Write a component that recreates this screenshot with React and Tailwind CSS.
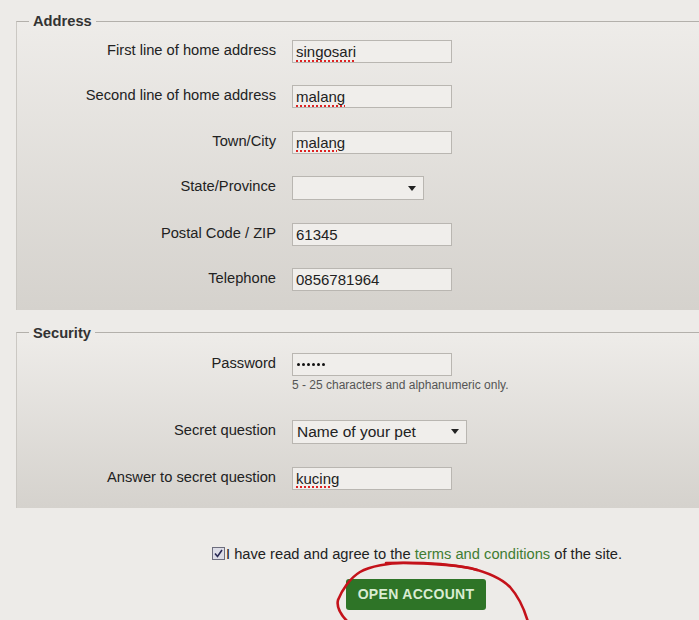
const Arrow = () => (
  <svg width="8" height="5" viewBox="0 0 8 5" className="shrink-0">
    <path d="M0 0 L8 0 L4 5 Z" fill="#222" />
  </svg>
);

const TextBox = ({ value, spell, dots }) => (
  <div className="flex h-[23px] w-[160px] items-center border border-[#b9b6b1] bg-[#f0eeeb] px-[3px] text-[15px] leading-none text-[#222]">
    {dots ? (
      <span className="flex gap-[2px] pl-[1px]">
        {[0, 1, 2, 3, 4, 5].map((i) => (
          <span key={i} className="h-[3px] w-[3px] rounded-full bg-[#111]" />
        ))}
      </span>
    ) : (
      <span
        className={
          spell
            ? "underline decoration-dotted decoration-[#d22] decoration-2 underline-offset-[3px]"
            : ""
        }
      >
        {value}
      </span>
    )}
  </div>
);

const SelectBox = ({ value, width }) => (
  <div
    className={`flex h-[24px] items-center justify-between border border-[#b9b6b1] bg-[#f0eeeb] pl-[4px] pr-[7px] text-[15.5px] text-[#222] ${width}`}
  >
    <span>{value}</span>
    <Arrow />
  </div>
);

const Row = ({ label, children }) => (
  <div className="flex items-start gap-4">
    <div className="w-[259px] text-right text-[14.7px] leading-5 text-[#222]">{label}</div>
    <div>{children}</div>
  </div>
);

const Group = ({ title, children, className }) => (
  <fieldset
    className={`ml-4 border-0 border-l border-t border-l-[#cbc8c3] border-t-[#b3b0ab] bg-linear-to-b from-[#eeece9] to-[#d5d2cd] px-0 ${className}`}
  >
    <legend className="ml-3 px-1 text-[14.7px] font-bold leading-4 text-[#333]">{title}</legend>
    {children}
  </fieldset>
);

export default function App() {
  return (
    <div
      className="relative h-[620px] w-[699px] overflow-hidden bg-[#edebe8] pt-[13px]"
      style={{ fontFamily: '"Liberation Sans", Arial, sans-serif' }}
    >
      <Group title="Address" className="pb-[19px] pt-[11px]">
        <div className="flex flex-col gap-[22.4px]">
          <Row label="First line of home address">
            <TextBox value="singosari" spell />
          </Row>
          <Row label="Second line of home address">
            <TextBox value="malang" spell />
          </Row>
          <Row label="Town/City">
            <TextBox value="malang" spell />
          </Row>
          <Row label="State/Province">
            <SelectBox value="" width="w-[132px]" />
          </Row>
          <Row label="Postal Code / ZIP">
            <TextBox value="61345" />
          </Row>
          <Row label="Telephone">
            <TextBox value="0856781964" />
          </Row>
        </div>
      </Group>

      <Group title="Security" className="mt-[15px] pb-[18px] pt-[12px]">
        <div className="flex flex-col">
          <Row label="Password">
            <TextBox dots />
            <p className="mt-[1px] text-[12px] leading-4 text-[#555]">
              5 - 25 characters and alphanumeric only.
            </p>
          </Row>
          <div className="mt-[27px]">
            <Row label="Secret question">
              <SelectBox value="Name of your pet" width="w-[175px]" />
            </Row>
          </div>
          <div className="mt-[23px]">
            <Row label="Answer to secret question">
              <TextBox value="kucing" spell />
            </Row>
          </div>
        </div>
      </Group>

      <div className="mt-[35px] flex items-center pl-[212px] text-[14.7px] text-[#222]">
        <span className="flex h-[13px] w-[13px] items-center justify-center border border-[#6d6d7d] bg-[#dcdce6]">
          <svg width="9" height="9" viewBox="0 0 9 9">
            <path d="M1 4.5 L3.5 7.5 L8 1" fill="none" stroke="#2a2a55" strokeWidth="1.6" />
          </svg>
        </span>
        <span className="ml-[1px]">
          I have read and agree to the{" "}
          <a className="text-[#3f7d32]">terms and conditions</a> of the site.
        </span>
      </div>

      <div className="mt-[14px] flex pl-[346px]">
        <button className="h-[31px] w-[140px] rounded-[3px] bg-[#2e7427] text-[14px] font-bold tracking-[0.3px] text-[#d9ecd2]">
          OPEN ACCOUNT
        </button>
      </div>

      <svg
        className="pointer-events-none absolute left-0 top-0"
        width="699"
        height="620"
        viewBox="0 0 699 620"
      >
        <path
          d="M477 570 C 465 566, 430 563, 403 563 C 390 563, 370 566, 360 572 C 350 578, 342 590, 338 600 C 336 608, 342 616, 348 622"
          fill="none"
          stroke="#c4121a"
          strokeWidth="2.6"
          strokeLinecap="round"
        />
        <path
          d="M386 563 C 420 562, 445 563, 470 568 C 490 573, 503 580, 510 587 C 518 596, 524 608, 528 622"
          fill="none"
          stroke="#c4121a"
          strokeWidth="2.6"
          strokeLinecap="round"
        />
      </svg>
    </div>
  );
}
